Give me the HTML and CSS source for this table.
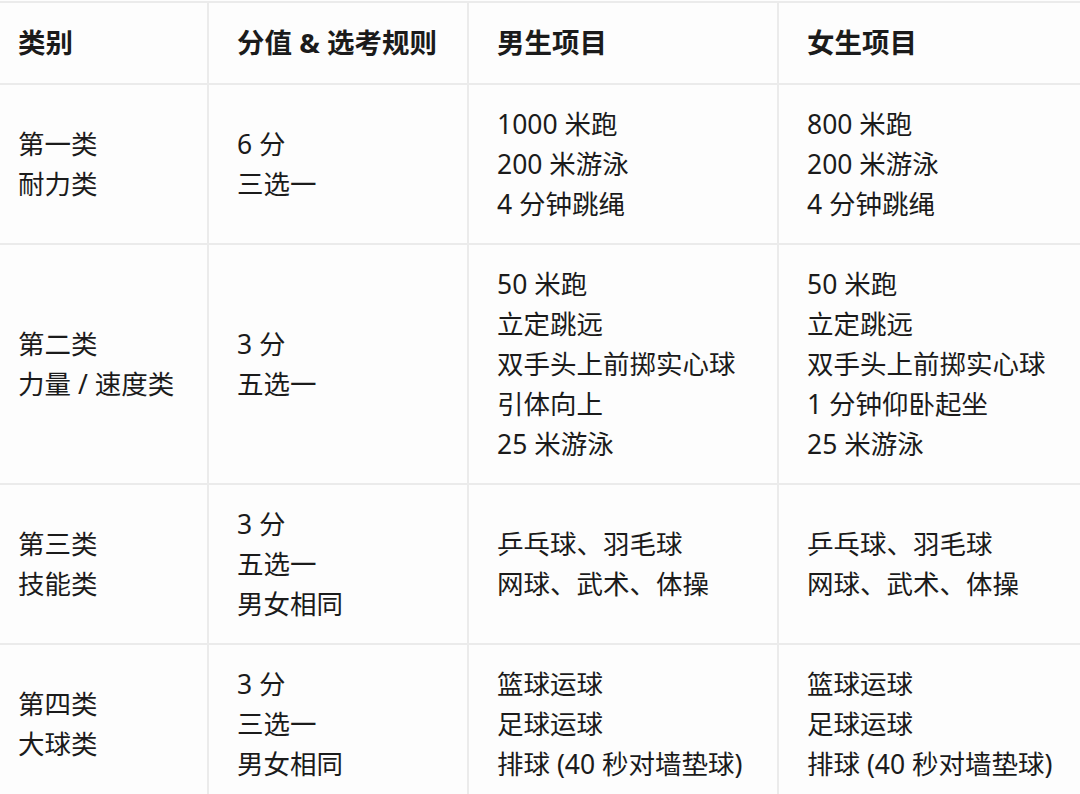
FILE: index.html
```html
<!DOCTYPE html>
<html lang="zh-CN">
<head>
<meta charset="utf-8">
<link rel="stylesheet" href="styles.css">
</head>
<body>
<table class="grid">
  <colgroup>
    <col class="c1"><col class="c2"><col class="c3"><col class="c4">
  </colgroup>
  <thead>
    <tr><th>类别</th><th>分值 &amp; 选考规则</th><th>男生项目</th><th>女生项目</th></tr>
  </thead>
  <tbody>
    <tr>
      <td>第一类<br>耐力类</td>
      <td>6 分<br>三选一</td>
      <td>1000 米跑<br>200 米游泳<br>4 分钟跳绳</td>
      <td>800 米跑<br>200 米游泳<br>4 分钟跳绳</td>
    </tr>
    <tr>
      <td>第二类<br>力量 / 速度类</td>
      <td>3 分<br>五选一</td>
      <td>50 米跑<br>立定跳远<br>双手头上前掷实心球<br>引体向上<br>25 米游泳</td>
      <td>50 米跑<br>立定跳远<br>双手头上前掷实心球<br>1 分钟仰卧起坐<br>25 米游泳</td>
    </tr>
    <tr>
      <td>第三类<br>技能类</td>
      <td>3 分<br>五选一<br>男女相同</td>
      <td>乒乓球、羽毛球<br>网球、武术、体操</td>
      <td>乒乓球、羽毛球<br>网球、武术、体操</td>
    </tr>
    <tr>
      <td>第四类<br>大球类</td>
      <td>3 分<br>三选一<br>男女相同</td>
      <td>篮球运球<br>足球运球<br>排球 (40 秒对墙垫球)</td>
      <td>篮球运球<br>足球运球<br>排球 (40 秒对墙垫球)</td>
    </tr>
  </tbody>
</table>
</body>
</html>
```
FILE: styles.css
```css
html, body {
  margin: 0;
  padding: 0;
  background: #fdfdfd;
  overflow: hidden;
}
body {
  font-family: "Noto Sans", "Noto Sans CJK SC", sans-serif;
  color: #1b1b1b;
}
.grid {
  border-collapse: collapse;
  table-layout: fixed;
  width: 1099px;
  margin: 1px 0 0 -12px;
  font-size: 26.5px;
  line-height: 40px;
}
.c1 { width: 219px; }
.c2 { width: 260px; }
.c3 { width: 310px; }
.c4 { width: 310px; }
.grid th, .grid td {
  border: 2px solid #ebebeb;
  padding: 19px 10px 19px 28px;
  text-align: left;
  vertical-align: middle;
  white-space: nowrap;
}
.grid th {
  font-weight: 700;
  font-size: 27.5px;
  padding-top: 20px;
  padding-bottom: 20px;
}
```
